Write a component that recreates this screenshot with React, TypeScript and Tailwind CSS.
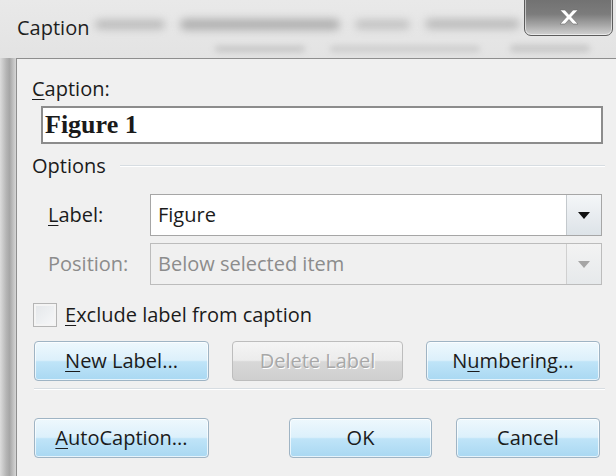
import { ReactNode } from 'react';

const font = { fontFamily: '"Open Sans", "Noto Sans", sans-serif' };

// Aero-style push button, blue glass look unless disabled
const DlgButton = ({ children, w, disabled }: { children: ReactNode; w: string; disabled?: boolean }) => (
  <div
    className={`${w} h-[40px] rounded-[4px] border flex items-center justify-center text-[20px] leading-none ${
      disabled
        ? 'border-[#bdbdbd] bg-[linear-gradient(to_bottom,#f5f5f5_0%,#ececec_48%,#d8d8d8_52%,#cfcfcf_100%)] text-[#a8a8a8] [text-shadow:1px_1px_0_#ffffff]'
        : 'border-[#9fb4c4] bg-[linear-gradient(to_bottom,#eef8fd_0%,#dcf0fb_48%,#bfe4f8_52%,#a9d8f2_100%)] text-[#1b1b1b] shadow-[inset_0_0_0_1px_rgba(255,255,255,0.7)]'
    }`}
  >
    {children}
  </div>
);

const U = ({ children }: { children: ReactNode }) => <span className="underline underline-offset-[3px] decoration-1">{children}</span>;

const Arrow = ({ color }: { color: string }) => (
  <svg width="12" height="7" viewBox="0 0 12 7">
    <path d="M0 0h12L6 7z" fill={color} />
  </svg>
);

const Combo = ({ value, disabled }: { value: string; disabled?: boolean }) => (
  <div
    className={`flex-1 h-[42px] flex border ${
      disabled ? 'border-[#bcbcbc] bg-[#f0f0f0] text-[#8c8c8c]' : 'border-[#a6a6a6] bg-white text-[#1b1b1b]'
    }`}
  >
    <div className="flex-1 flex items-center pl-[7px] text-[20px]">{value}</div>
    <div
      className={`w-[35px] flex items-center justify-center border-l ${
        disabled
          ? 'border-[#d0d0d0] bg-[linear-gradient(to_bottom,#f3f3f3,#e6e9eb)]'
          : 'border-[#c4c9cd] bg-[linear-gradient(to_bottom,#f4f6f8,#dde3e8)]'
      }`}
    >
      <Arrow color={disabled ? '#a5a5a5' : '#111111'} />
    </div>
  </div>
);

export default function App() {
  return (
    <div style={font} className="w-[616px] h-[476px] overflow-hidden flex flex-col bg-[#e2e2e2]">
      {/* title bar over blurred glass */}
      <div className="relative h-[58px] shrink-0 bg-[linear-gradient(to_bottom,#e9e9e9,#e3e3e3)] overflow-hidden">
        <div className="absolute left-[95px] top-[20px] w-[70px] h-[9px] rounded-full bg-[#9a9a9a] blur-[4px] opacity-60" />
        <div className="absolute left-[180px] top-[19px] w-[160px] h-[11px] rounded-full bg-[#8a8a8a] blur-[4px] opacity-60" />
        <div className="absolute left-[355px] top-[20px] w-[55px] h-[9px] rounded-full bg-[#9a9a9a] blur-[4px] opacity-50" />
        <div className="absolute left-[425px] top-[19px] w-[95px] h-[10px] rounded-full bg-[#8f8f8f] blur-[4px] opacity-50" />
        <div className="absolute left-[215px] top-[46px] w-[90px] h-[6px] rounded-full bg-[#a5a5a5] blur-[3px] opacity-50" />
        <div className="absolute left-[330px] top-[46px] w-[150px] h-[6px] rounded-full bg-[#a5a5a5] blur-[3px] opacity-40" />
        <div className="absolute left-[510px] top-[45px] w-[80px] h-[7px] rounded-full bg-[#9a9a9a] blur-[3px] opacity-40" />
        <div className="relative h-full flex items-center pl-[17px] pb-[2px] text-[20px] text-[#1e1e1e]">Caption</div>
        <div className="absolute left-[524px] top-[-4px] w-[89px] h-[40px] rounded-b-[7px] border border-[#5c5c5c] bg-[linear-gradient(to_bottom,#707070_0%,#7c7c7c_45%,#a8a8a8_75%,#d2d2d2_100%)] shadow-[inset_0_0_0_1px_rgba(255,255,255,0.55)] flex items-center justify-center pt-[2px]">
          <svg width="22" height="16" viewBox="0 0 22 16">
            <path d="M2 1h5l4 4.5L15 1h5l-6.5 7L20 15h-5l-4-4.5L7 15H2l6.5-7z" fill="#ffffff" stroke="#6a6a6a" strokeWidth="0.6" />
          </svg>
        </div>
      </div>

      <div className="flex-1 flex">
        {/* blurred window frame */}
        <div className="w-[16px] shrink-0 bg-[linear-gradient(to_right,#dcdcdc_0%,#b4b4b4_40%,#a6a6a6_60%,#d6d6d6_100%)]" />

        <div className="flex-1 bg-[#f0f0f0] border-l border-t border-[#8e8e8e] pl-[15px] pr-[13px] pt-[18px] text-[20px] text-[#1b1b1b] leading-[24px]">
          <div>
            <U>C</U>aption:
          </div>
          <div className="mt-[5px] ml-[9px] h-[38px] border-2 border-[#8c8c8c] bg-white flex items-center pl-[2px]">
            <span className="text-[26px] font-bold text-[#1a1a1a]" style={{ fontFamily: '"Liberation Serif", serif' }}>
              Figure 1
            </span>
          </div>

          <div className="mt-[10px] flex items-center">
            <span>Options</span>
            <div className="flex-1 ml-[14px] mr-[-2px] h-[2px] border-t border-[#d7dde2] border-b border-b-white" />
          </div>

          <div className="mt-[16px] flex items-center pl-[16px] pr-[1px]">
            <span className="w-[102px]">
              <U>L</U>abel:
            </span>
            <Combo value="Figure" />
          </div>
          <div className="mt-[7px] flex items-center pl-[16px] pr-[1px]">
            <span className="w-[102px] text-[#8c8c8c]">Position:</span>
            <Combo value="Below selected item" disabled />
          </div>

          <div className="mt-[18px] flex items-center pl-[1px]">
            <div className="w-[24px] h-[24px] border border-[#b5b5b5] bg-[linear-gradient(135deg,#e3e6e9,#f7f8f9)] shadow-[inset_0_0_0_2px_#f4f4f4]" />
            <span className="ml-[8px]">
              <U>E</U>xclude label from caption
            </span>
          </div>

          <div className="mt-[14px] flex justify-between pl-[2px] pr-[3px]">
            <DlgButton w="w-[175px]">
              <U>N</U>ew Label...
            </DlgButton>
            <DlgButton w="w-[171px]" disabled>
              Delete Label
            </DlgButton>
            <DlgButton w="w-[174px]">
              N<U>u</U>mbering...
            </DlgButton>
          </div>

          <div className="mt-[7px] ml-[2px] mr-[-2px] h-[2px] border-t border-[#d7dde2] border-b border-b-white" />

          <div className="mt-[28px] flex pl-[2px] pr-[3px]">
            <DlgButton w="w-[175px]">
              <U>A</U>utoCaption...
            </DlgButton>
            <div className="flex-1" />
            <DlgButton w="w-[143px]">OK</DlgButton>
            <div className="w-[24px]" />
            <DlgButton w="w-[144px]">Cancel</DlgButton>
          </div>
        </div>
      </div>
    </div>
  );
}
